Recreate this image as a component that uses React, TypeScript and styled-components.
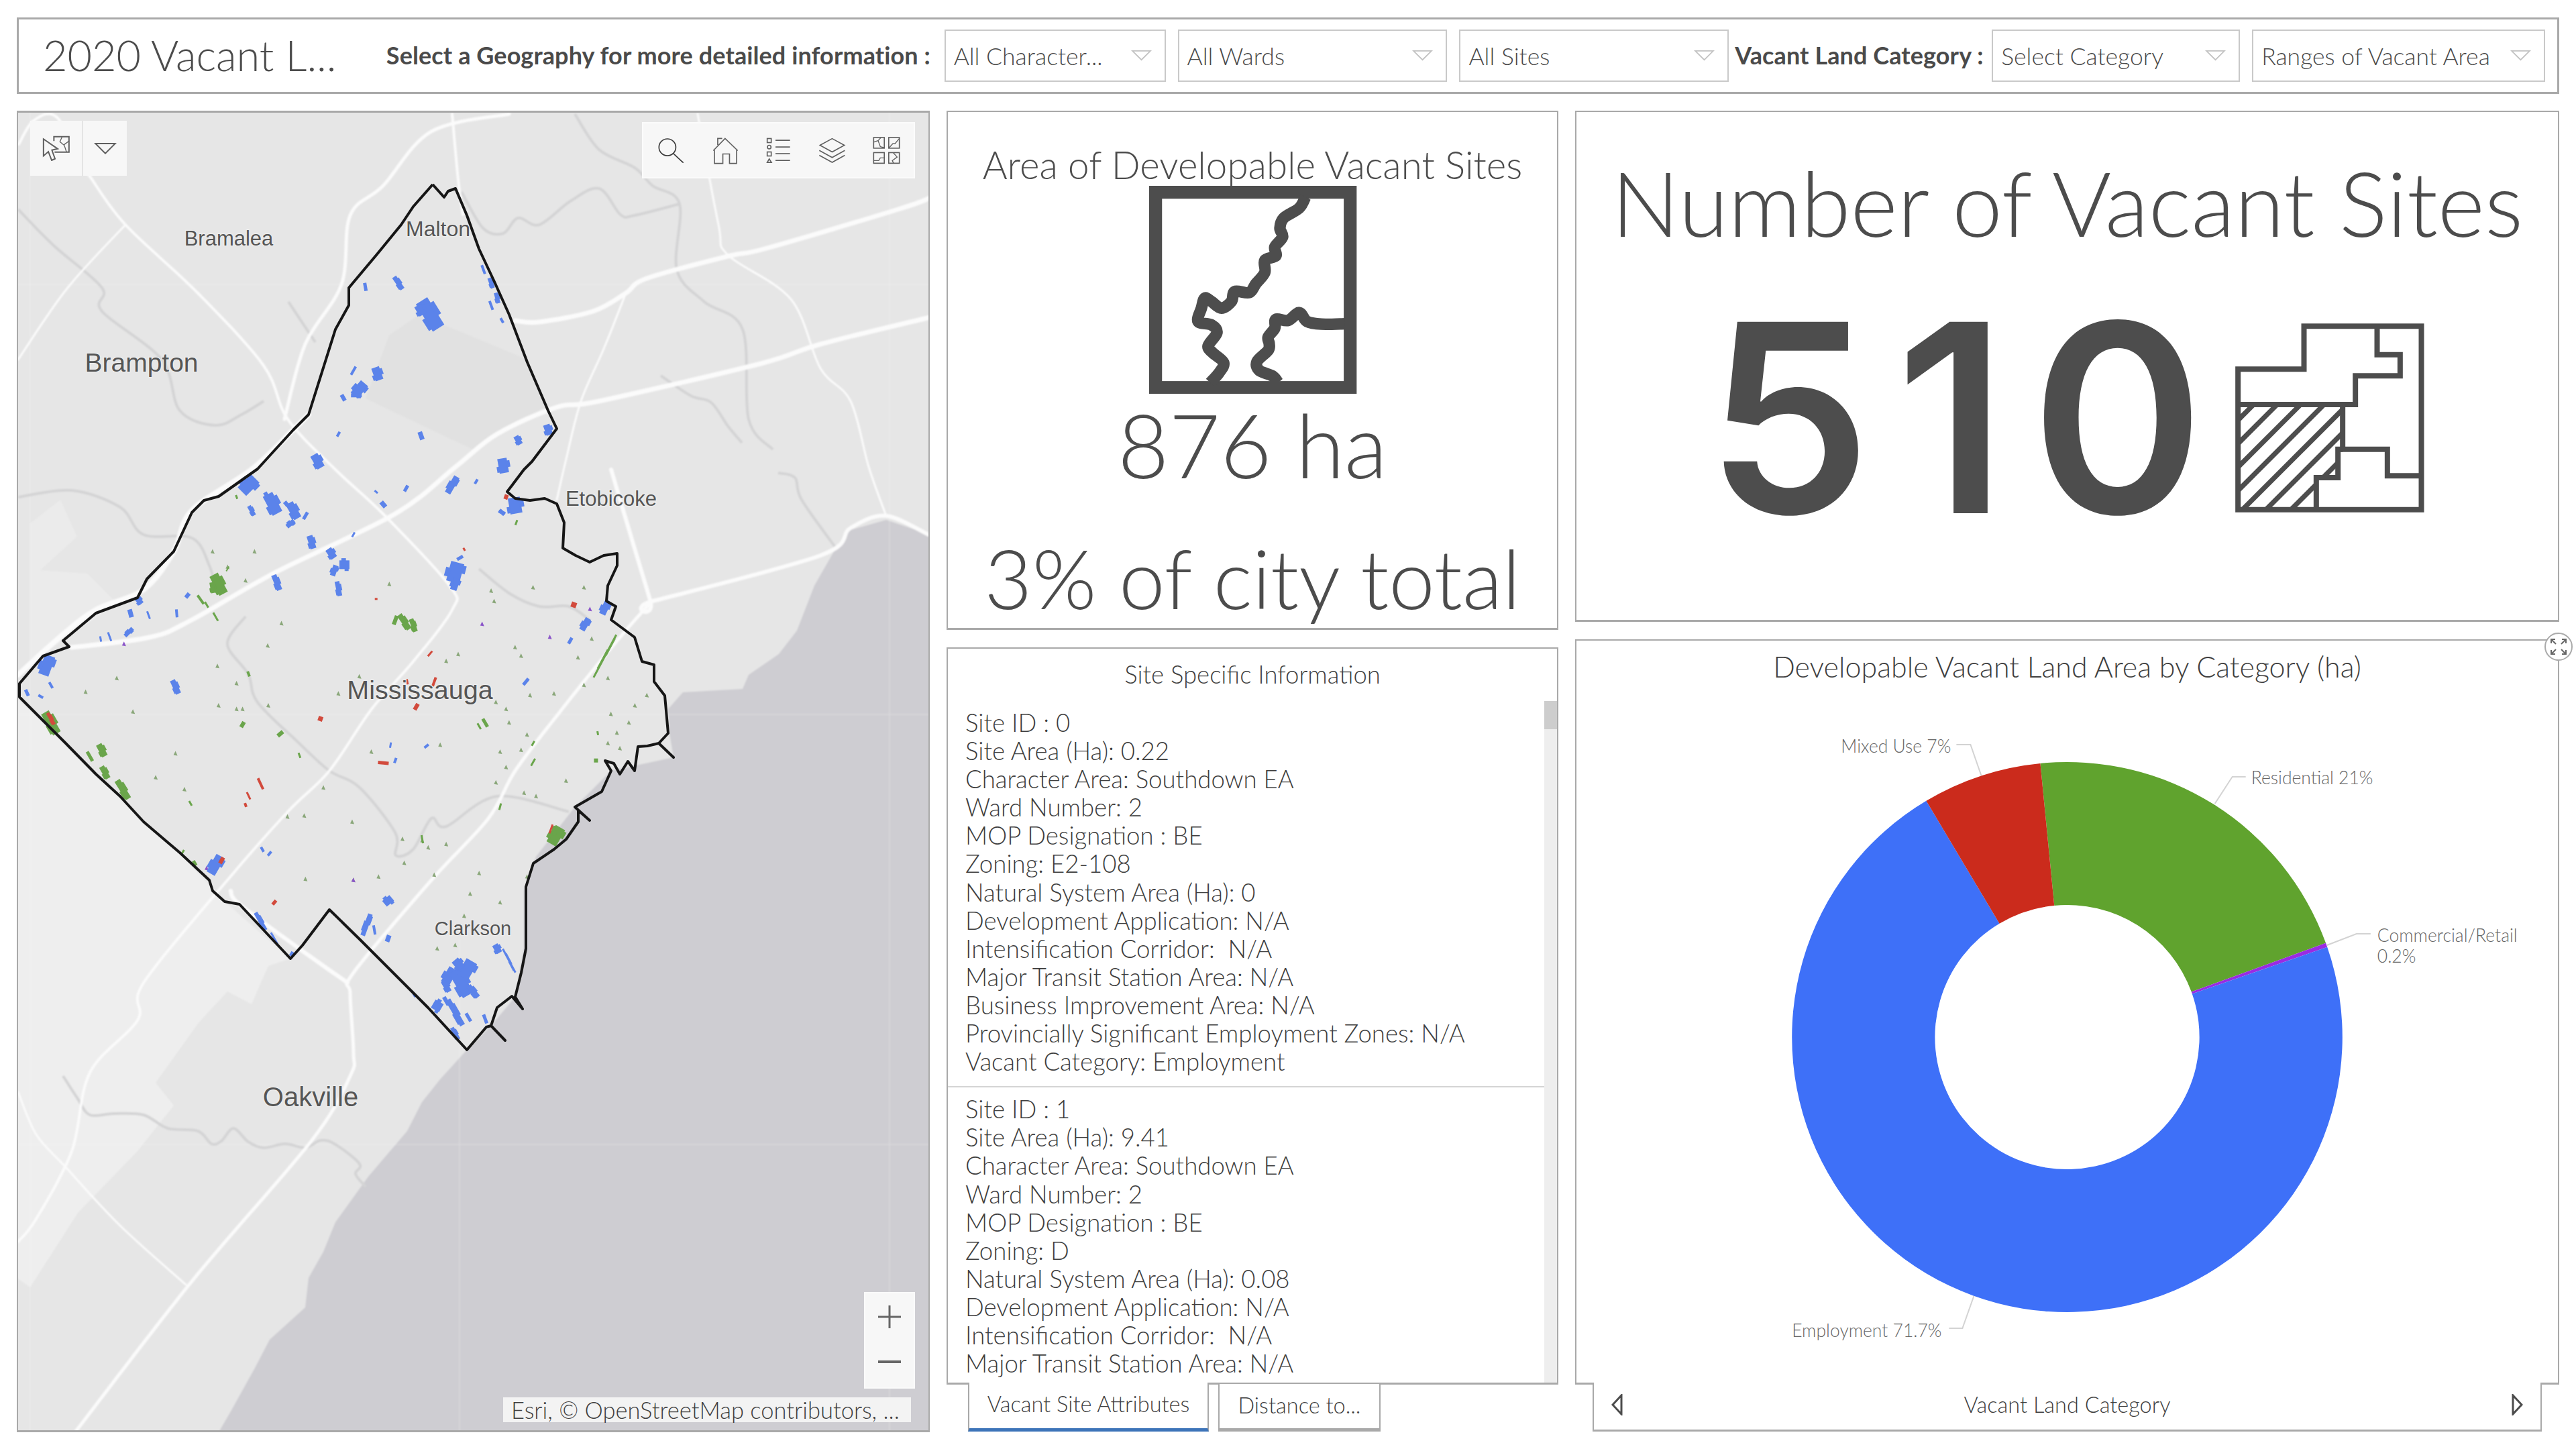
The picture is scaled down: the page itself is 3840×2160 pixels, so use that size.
import React from 'react';
import styled, { createGlobalStyle } from 'styled-components';

type Pt = [number, number];

const GlobalStyle = createGlobalStyle`
  html, body { margin: 0; padding: 0; background: #fff; }
  * { box-sizing: border-box; }
`;

const Page = styled.div`
  width: 3840px;
  height: 2160px;
  padding: 26px 25px 25px;
  font-family: Lato, "Open Sans", sans-serif;
  font-weight: 300;
  color: #4c4c4c;
  display: flex;
  flex-direction: column;
  gap: 25px;
`;

const Header = styled.header`
  height: 114px;
  border: 3px solid #a9a9a9;
  display: flex;
  align-items: center;
  padding-left: 36px;
`;
const AppTitle = styled.h1`
  margin: 0 0 4px;
  width: 512px;
  font-size: 63px;
  font-weight: 300;
  white-space: nowrap;
`;
const FilterLabel = styled.span<{ $w: number }>`
  font-size: 36px;
  font-weight: 700;
  letter-spacing: 0.1px;
  width: ${p => p.$w}px;
  white-space: nowrap;
  color: #4a4a4a;
  margin-bottom: 2px;
`;
const SelectBox = styled.div<{ $w: number; $gap?: number }>`
  width: ${p => p.$w}px;
  height: 78px;
  margin-right: ${p => p.$gap ?? 18}px;
  border: 2px solid #c9c9c9;
  display: flex;
  align-items: center;
  justify-content: space-between;
  padding: 0 19px 0 12px;
  font-size: 35.5px;
  font-weight: 300;
  color: #4a4a4a;
  white-space: nowrap;
`;

const Main = styled.main`
  flex: 1;
  display: grid;
  grid-template-columns: 1361px 912px 1467px;
  column-gap: 25px;
  min-height: 0;
`;
const MapPanel = styled.section`
  position: relative;
  border: 3px solid #a9a9a9;
  border-width: 3px 2px 3px 2px;
  overflow: hidden;
  background: #e6e6e6;
`;
const MapCanvas = styled.svg`
  position: absolute;
  inset: 0;
  width: 100%;
  height: 100%;
`;
const BaseLayer = styled.g`
  filter: blur(0.8px);
`;
const Widget = styled.div<{ $l?: number; $r?: number; $t?: number; $b?: number }>`
  position: absolute;
  ${p => (p.$l !== undefined ? `left: ${p.$l}px;` : '')}
  ${p => (p.$r !== undefined ? `right: ${p.$r}px;` : '')}
  ${p => (p.$t !== undefined ? `top: ${p.$t}px;` : '')}
  ${p => (p.$b !== undefined ? `bottom: ${p.$b}px;` : '')}
  background: #f7f7f7;
  display: flex;
  align-items: center;
`;
const SelectWidget = styled(Widget)`
  width: 144px;
  height: 82px;
`;
const SelectSlot = styled.div<{ $w: number; $line?: boolean }>`
  width: ${p => p.$w}px;
  height: 100%;
  display: flex;
  align-items: center;
  justify-content: center;
  ${p => (p.$line ? 'border-right: 2px solid #e4e4e4;' : '')}
`;
const ToolsWidget = styled(Widget)`
  width: 407px;
  height: 84px;
  gap: 38px;
  padding: 0 0 0 20px;
  border: 2px solid #fbfbfb;
`;
const ZoomWidget = styled(Widget)`
  width: 76px;
  height: 144px;
  flex-direction: column;
  justify-content: center;
  gap: 31px;
  padding-bottom: 3px;
  border: 2px solid #fafafa;
`;
const Attribution = styled.div`
  position: absolute;
  right: 26px;
  bottom: 12px;
  width: 608px;
  height: 37px;
  line-height: 37px;
  padding-left: 12px;
  background: #f3f3f3;
  font-size: 34.5px;
  font-weight: 300;
  color: #3f3f3f;
  white-space: nowrap;
`;

const MiddleColumn = styled.div`
  display: flex;
  flex-direction: column;
  gap: 26px;
  min-height: 0;
`;
const RightColumn = styled(MiddleColumn)``;
const AreaPanel = styled.section`
  height: 774px;
  border: 2px solid #a9a9a9;
  border-bottom-width: 3px;
  display: flex;
  flex-direction: column;
  align-items: center;
  padding-top: 43px;
`;
const AreaTitle = styled.h2`
  margin: 0 0 -3px;
  line-height: 70px;
  font-size: 56.5px;
  font-weight: 300;
  white-space: nowrap;
`;
const AreaValue = styled.div`
  font-size: 132px;
  line-height: 150px;
  font-weight: 300;
  white-space: nowrap;
`;
const AreaShare = styled.div`
  margin-top: 49px;
  font-size: 123px;
  line-height: 150px;
  font-weight: 300;
  white-space: nowrap;
`;
const NumberPanel = styled.section`
  height: 762px;
  border: 2px solid #a9a9a9;
  border-bottom-width: 3px;
  display: flex;
  flex-direction: column;
  align-items: center;
  padding-top: 54px;
`;
const NumberTitle = styled.h2`
  margin: 0;
  font-size: 134.5px;
  line-height: 160px;
  font-weight: 300;
  white-space: nowrap;
`;
const NumberRow = styled.div`
  margin-top: 42px;
  padding-right: 6px;
  display: flex;
  align-items: center;
  gap: 10px;
`;
const BigNumber = styled.div`
  font-family: Inter, "Open Sans", sans-serif;
  font-size: 392px;
  line-height: 400px;
  font-weight: 600;
  color: #4d4d4d;
  letter-spacing: 36px;
`;

const ListArea = styled.div`
  display: flex;
  flex-direction: column;
  flex: 1;
  min-height: 0;
`;
const ListPanel = styled.section`
  height: 1099px;
  border: 3px solid #a9a9a9;
  border-width: 2px 2px 3px 2px;
  display: flex;
  flex-direction: column;
  overflow: hidden;
`;
const ListTitle = styled.h3`
  margin: 0;
  text-align: center;
  font-size: 36.5px;
  line-height: 76px;
  font-weight: 300;
  color: #3f3f3f;
  flex: none;
`;
const ListBody = styled.div`
  flex: 1;
  display: flex;
  min-height: 0;
`;
const ListItems = styled.div`
  flex: 1;
  overflow: hidden;
`;
const SiteItem = styled.div`
  padding: 13px 26px 16px;
  font-size: 36.6px;
  line-height: 42.1px;
  font-weight: 300;
  color: #3e3e3e;
  white-space: pre;
  & + & {
    border-top: 2px solid #d4d4d4;
    padding-top: 11px;
  }
`;
const ScrollTrack = styled.div`
  width: 19px;
  background: #eeeeee;
  flex: none;
  margin-top: 2px;
`;
const ScrollThumb = styled.div`
  width: 100%;
  height: 42px;
  background: #cdcdcd;
`;
const Tabs = styled.div`
  display: flex;
  gap: 14px;
  padding-left: 32px;
  margin-top: -3px;
  position: relative;
`;
const Tab = styled.div<{ $active?: boolean; $w: number }>`
  width: ${p => p.$w}px;
  height: 73px;
  background: #fff;
  border: 2px solid #a9a9a9;
  border-top: ${p => (p.$active ? '0' : '2px solid #a9a9a9')};
  border-bottom: 5px solid ${p => (p.$active ? '#3d74b9' : '#a9a9a9')};
  text-align: center;
  line-height: 64px;
  font-size: 32.5px;
  font-weight: 300;
  color: #3f3f3f;
  white-space: nowrap;
`;

const ChartPanel = styled.section`
  position: relative;
  height: 1111px;
  border: 2px solid #a9a9a9;
  border-width: 2px 2px 3px 2px;
  flex: none;
`;
const ChartTitle = styled.h2`
  margin: 0;
  text-align: center;
  font-size: 43px;
  line-height: 77px;
  font-weight: 300;
  color: #3f3f3f;
`;
const ChartCanvas = styled.svg`
  display: block;
  width: 100%;
  height: 1029px;
`;
const ChartLabel = styled.text`
  font-family: Lato, sans-serif;
  font-size: 26.5px;
  font-weight: 300;
  fill: #666;
`;
const ExpandButton = styled.div`
  position: absolute;
  right: -22px;
  top: -12px;
  width: 42px;
  height: 42px;
  border-radius: 50%;
  border: 2px solid #aaa;
  background: #fff;
  display: flex;
  align-items: center;
  justify-content: center;
`;
const ChartFooter = styled.div`
  position: relative;
  margin: -3px 26px 0;
  height: 73px;
  background: #fff;
  border: 2px solid #a9a9a9;
  border-top: 0;
  border-bottom-width: 3px;
  display: flex;
  align-items: center;
  justify-content: space-between;
  padding: 0 26px 5px;
  font-size: 32.5px;
  font-weight: 300;
  color: #3f3f3f;
`;
const MapLabel = styled.text<{ $s: number }>`
  font-family: "Liberation Sans", Arial, sans-serif;
  font-size: ${p => p.$s}px;
  fill: #555;
  stroke: #eeeeee;
  stroke-width: 2.5px;
  paint-order: stroke;
  dominant-baseline: middle;
  text-anchor: middle;
`;

/* ---------- geometry helpers ---------- */
const smooth = (p: Pt[]) => {
  let d = `M${p[0][0]},${p[0][1]}`;
  for (let i = 0; i < p.length - 1; i++) {
    const a = p[Math.max(i - 1, 0)];
    const b = p[i];
    const c = p[i + 1];
    const e = p[Math.min(i + 2, p.length - 1)];
    d += ` C${b[0] + (c[0] - a[0]) / 6},${b[1] + (c[1] - a[1]) / 6} ${c[0] - (e[0] - b[0]) / 6},${c[1] - (e[1] - b[1]) / 6} ${c[0]},${c[1]}`;
  }
  return d;
};
const poly = (p: Pt[]) => p.map(q => q.join(',')).join(' ');

const polar = (cx: number, cy: number, r: number, deg: number): Pt => {
  const a = ((deg - 90) * Math.PI) / 180;
  return [cx + r * Math.cos(a), cy + r * Math.sin(a)];
};
const ring = (from: number, to: number) => {
  const [cx, cy, R, r] = [3082, 1546, 410, 197];
  const large = to - from > 180 ? 1 : 0;
  const a = polar(cx, cy, R, from);
  const b = polar(cx, cy, R, to);
  const c = polar(cx, cy, r, to);
  const d = polar(cx, cy, r, from);
  return `M${a} A${R},${R} 0 ${large} 1 ${b} L${c} A${r},${r} 0 ${large} 0 ${d} Z`;
};

/* ---------- map data (page coordinates) ---------- */
const boundary: Pt[] = [
  [645,275],[662,294],[668,285],[679,281],[696,321],[714,371],[737,420],[759,469],[786,540],[817,612],[830,639],[793,688],[781,700],[756,733],[768,743],[790,746],[812,743],[830,751],[841,779],[839,817],[858,828],[879,838],[900,828],[920,825],[920,843],[906,873],[904,896],[918,904],[911,924],[946,950],[957,986],[975,991],[975,1016],[991,1037],[996,1093],[982,1108],[1004,1129],[982,1108],[965,1112],[951,1113],[946,1149],[936,1135],[924,1154],[915,1138],[902,1134],[911,1149],[897,1180],[857,1203],[879,1223],[862,1208],[862,1225],[844,1251],[826,1266],[795,1287],[784,1322],[784,1414],[777,1450],[768,1486],[779,1504],[763,1485],[741,1502],[732,1529],[753,1551],[732,1529],[725,1531],[696,1565],[638,1502],[580,1444],[536,1400],[491,1356],[451,1409],[433,1429],[357,1348],[335,1344],[317,1328],[312,1312],[268,1271],[214,1225],[179,1187],[143,1154],[98,1108],[29,1039],[29,1019],[64,978],[103,964],[94,955],[143,914],[205,891],[219,863],[259,822],[286,764],[304,746],[326,740],[384,699],[437,641],[460,618],[500,491],[520,455],[520,429],[562,379],[598,335],[616,308],[645,275],
];
const lake: Pt[] = [
  [1386,797],[1321,775],[1268,790],[1246,817],[1214,873],[1188,940],[1161,975],[1116,1006],[1107,1027],[1018,1032],[996,1057],[998,1093],[1004,1129],[911,1149],[857,1203],[799,1277],[781,1328],[781,1414],[768,1486],[732,1529],[696,1565],[656,1609],[629,1643],[607,1686],[549,1754],[500,1822],[482,1866],[460,1905],[455,1949],[402,1997],[379,2041],[344,2104],[326,2135],[1386,2135],
];
const lightWest: Pt[] = [
  [25,1040],[98,1108],[143,1154],[214,1225],[268,1271],[335,1344],[433,1429],[400,1440],[375,1497],[339,1478],[295,1526],[232,1614],[259,1648],[205,1716],[116,1808],[45,1919],[25,1905],
];
const lightNorth: Pt[] = [[45,780],[90,745],[115,800],[60,850],[130,855],[175,900],[100,950],[45,990]];
const darkBand: Pt[] = [[580,500],[625,469],[786,536],[812,607],[705,670],[545,594]];

const roads: [Pt[], number][] = [
  [[[1386,295],[1339,312],[1143,370],[1085,382],[964,415],[933,437],[884,464],[804,480],[768,478]],7],
  [[[759,170],[643,196],[571,277],[522,321],[509,424],[455,513],[424,625]],5],
  [[[674,170],[683,268],[690,320]],4],
  [[[1040,170],[1071,335],[1085,380],[1179,446],[1223,549],[1268,598],[1295,696],[1321,769]],3],
  [[[1386,473],[1223,513],[1134,542],[893,598],[830,607],[741,647],[679,696],[589,766],[411,853],[286,924],[223,950],[107,965]],7],
  [[[933,437],[900,520],[866,598],[845,680],[830,745]],3],
  [[[28,215],[50,180],[85,175],[125,250],[134,263],[187,335],[295,437],[393,545],[429,625],[500,700],[571,766],[670,873],[674,909],[616,986],[554,1057],[491,1149],[429,1210],[339,1312],[214,1465],[205,1521],[134,1599],[107,1716],[54,1817],[27,1851]],4],
  [[[187,335],[100,430],[27,536]],3],
  [[[911,700],[969,894],[973,896],[1223,828],[1268,787],[1321,769],[1384,797]],6],
  [[[969,899],[920,955],[830,1067],[768,1149],[728,1220],[643,1312],[527,1450],[522,1481],[527,1570],[522,1604],[464,1701],[286,1910],[112,2135]],5],
  [[[344,1328],[357,1348],[446,1414],[518,1465]],6],
  [[[27,1006],[89,950],[143,909],[214,879],[259,822],[286,761],[375,700],[437,641],[460,618]],8],
  [[[27,1628],[54,1691],[98,1740],[179,1827],[277,1915]],3],
];
const rivers: Pt[][] = [
  [[94,1604],[116,1638],[134,1662],[170,1660],[214,1662],[250,1682],[295,1686],[315,1705],[330,1701],[348,1682],[370,1702],[393,1711],[425,1705],[455,1711],[478,1700],[500,1706],[536,1735],[530,1750],[545,1769]],
  [[27,741],[107,731],[179,756],[214,797],[286,802],[312,843],[322,880]],
  [[366,919],[339,960],[370,1005],[384,1047],[446,1108],[491,1149],[536,1174],[589,1241],[590,1275],[616,1266],[643,1220],[665,1232],[741,1187],[848,1210]],
  [[857,170],[893,223],[946,250],[973,277],[1013,304],[1009,402],[1050,450],[1107,491],[1116,625],[1152,670]],
  [[27,312],[80,366],[152,429],[152,464],[241,536],[268,612],[321,634],[360,618],[393,598]],
  [[688,286],[720,340],[750,348],[772,325],[804,335],[850,300],[893,281],[925,320],[946,321],[1013,304]],
  [[714,848],[760,885],[804,904],[848,904],[880,925]],
  [[985,560],[1030,590],[1060,600],[1085,635],[1106,660]],
  [[1160,705],[1185,712],[1195,745],[1246,817]],
  [[430,450],[460,495],[470,510]],
];

type Parcel = [number, number, number, number, number, string];
const B = '#5b83ea';
const G = '#6aa54b';
const R = '#d24a3c';
const z1 = (a: number[], c: string): Parcel => [a[0] / 1.12, a[1] / 2.24, a[2], a[3], a[4], c];
const z3 = (a: number[], c: string): Parcel => [a[0] / 1.12, 700 + a[1] / 1.96, a[2], a[3], a[4], c];
const z4 = (a: number[], c: string): Parcel => [a[0] / 1.12, 1400 + a[1] / 2.06, a[2], a[3], a[4], c];

const parcels: Parcel[] = [
  ...[[718,1050,48,20,58],[702,1035,16,12,60],[630,1248,20,12,70],[600,1300,24,14,-50],[595,1320,16,6,0],[573,1328,10,6,60],[665,945,22,7,55],[703,1455,12,7,70],[865,1470,14,8,60],[915,1435,16,10,70],[820,945,16,6,70],[830,995,16,6,75],[807,900,14,4,70],[820,1020,14,4,70],[610,958,12,5,80],[590,1238,14,4,-60],[530,1540,22,12,60],[840,1555,22,14,80],[838,1070,8,4,60],[565,1450,8,4,-60]].map(a => z1(a, B)),
  ...[[415,45,28,18,-45],[455,100,32,16,62],[490,120,26,12,60],[485,158,14,7,-40],[420,120,16,6,60],[520,212,20,9,72],[553,245,16,10,55],[575,278,15,13,0],[558,295,16,8,-70],[462,330,24,8,68],[565,348,22,7,78],[755,45,28,9,-60],[860,105,24,18,80],[838,125,10,6,40],[640,102,10,7,50],[760,300,30,20,-75],[760,335,18,10,-70],[768,258,10,5,-30],[1010,405,20,10,-65],[977,452,20,9,-60],[952,500,10,5,-60],[232,383,12,8,50],[218,420,12,7,75],[248,425,12,3,70],[295,420,12,4,85],[313,368,8,6,-50],[215,475,16,6,-45],[183,488,14,3,70],[168,495,8,3,80],[78,572,30,16,-70],[85,630,10,4,60],[45,652,10,5,65],[68,663,8,4,30],[293,635,22,8,65],[878,620,12,5,-50],[360,1155,30,14,-60],[438,1110,8,4,60],[450,1122,8,4,-50],[648,1260,14,11,-40],[612,1330,34,7,-70],[625,1345,14,4,80],[648,1370,10,7,-70],[830,1400,14,9,60],[850,1435,40,3,62],[435,1320,30,6,60],[458,1370,20,3,60],[487,1415,7,5,-60],[652,805,8,3,-80],[712,808,8,4,-40],[660,850,8,4,-70],[510,135,12,5,-60],[590,190,8,3,-60],[678,55,10,5,-60],[795,35,8,4,-60],[838,125,10,5,20],[628,65,6,3,40],[445,75,10,6,60],[478,100,8,6,50],[750,1480,26,14,-60],[770,1500,42,18,60],[780,1460,28,18,-60],[765,1445,16,12,50],[790,1525,22,8,50],[745,1510,18,8,60]].map(a => z3(a, B)),
  ...[[730,205,14,14,30],[745,190,14,6,60],[760,225,44,8,60],[782,240,14,5,60],[810,245,14,5,70],[760,290,20,6,60],[692,172,6,4,60]].map(a => z4(a, B)),
  ...[[365,335,32,14,62],[355,345,16,7,80],[335,380,16,4,55],[345,395,10,3,60],[360,430,14,3,60],[675,445,26,8,55],[690,455,20,7,70],[660,440,14,6,-70],[415,597,8,4,70],[405,745,9,6,-60],[468,772,10,6,-40],[500,835,8,3,70],[85,740,36,13,60],[170,820,20,9,62],[150,838,16,5,60],[175,885,20,8,60],[205,935,32,9,58],[318,975,8,3,60],[305,1118,8,3,-60],[325,1150,8,5,60],[810,740,14,5,60],[928,1070,28,16,-60],[925,1055,14,6,80],[1010,545,72,3,-62],[995,850,6,6,0],[890,855,12,3,-60],[998,770,6,3,80],[835,985,10,3,-75],[862,155,8,3,-70],[395,80,6,3,70],[380,290,8,2,-60],[800,750,10,3,60],[890,800,8,3,-60],[705,1080,12,3,80]].map(a => z3(a, G)),
  ...[[85,728,20,5,60],[435,918,18,4,65],[415,953,12,3,65],[410,980,6,4,70],[535,728,7,7,20],[640,857,16,5,5],[695,693,10,6,-60],[725,620,14,4,-70],[680,620,8,3,80],[718,538,10,3,-50],[958,395,8,8,20],[458,1265,8,5,-50],[920,1050,14,3,-70],[370,1142,10,6,-60],[845,80,7,6,-70],[628,378,4,3,0],[775,233,5,3,60]].map(a => z3(a, R)),
];
const tiny: Pt[] = [[470,450],[447,515],[363,575],[195,610],[143,650],[365,690],[405,700],[395,625],[448,690],[222,708],[293,830],[260,900],[308,935],[540,930],[480,1015],[508,1012],[588,1030],[672,1080],[675,1150],[725,1185],[632,1190],[510,1197],[590,1200],[760,1390],[730,1400],[775,1305],[800,1180],[835,1265],[880,1190],[785,1240],[875,945],[828,915],[845,870],[870,820],[835,825],[945,910],[895,955],[745,1095],[715,1105],[705,1085],[620,825],[735,805],[880,775],[850,740],[845,700],[828,680],[885,660],[925,655],[975,630],[965,550],[870,545],[860,520],[765,540],[745,560],[650,335],[825,385],[820,355],[890,345],[975,345],[1030,770],[1050,740],[1020,715],[1060,690],[1035,815],[1015,800],[1080,660],[988,495],[355,240],[425,240],[380,285],[410,325],[565,655],[600,605],[395,700],[1015,610]];
const purple: Pt[] = [[805,452],[918,490],[345,1165],[207,510],[590,1200],[985,408]];

/* ---------- icons ---------- */
const Line = { fill: 'none', stroke: '#606060', strokeWidth: 5 } as const;

const CursorMapIcon = () => (
  <svg width="44" height="38" viewBox="190 180 132 115" fill="none" stroke="#5f5f5f" strokeWidth="6">
    <path d="M245,205 V185 H313 V255 H248" />
    <path d="M282,186 L272,208 L292,225 L302,255 M290,222 L313,205" strokeWidth="4" />
    <path d="M198,196 L262,240 L236,246 L250,285 L235,292 L220,253 L198,272 Z" fill="#f7f7f7" />
  </svg>
);
const DownTriangle = ({ c = '#5f5f5f', w = 34, s = 2 }: { c?: string; w?: number; s?: number }) => (
  <svg width={w} height={w * 0.55} viewBox="0 0 34 19" fill="none" stroke={c} strokeWidth={s}>
    <path d="M2,2 H32 L17,17 Z" />
  </svg>
);
const SearchIcon = () => (
  <svg width="43" height="43" viewBox="85 90 130 130" fill="none" stroke="#3a3a3a" strokeWidth="5">
    <circle cx="133" cy="140" r="38" />
    <path d="M160,168 L205,210" />
  </svg>
);
const HomeIcon = () => (
  <svg width="43" height="43" viewBox="335 95 130 130" {...Line}>
    <path d="M345,160 L398,105 L455,160" />
    <path d="M350,158 V218 H388 V175 H418 V218 H450 V158" />
    <path d="M365,135 V105 H385" />
  </svg>
);
const ListIcon = () => (
  <svg width="40" height="42" viewBox="580 95 120 125" {...Line}>
    <rect x="588" y="105" width="18" height="18" />
    <circle cx="597" cy="143" r="8" />
    <rect x="588" y="165" width="18" height="18" />
    <path d="M597,196 L588,212 H607 Z" />
    <path d="M625,113 H690 M625,143 H690 M625,173 H690 M625,203 H690" />
  </svg>
);
const LayersIcon = () => (
  <svg width="43" height="42" viewBox="815 95 130 125" {...Line}>
    <path d="M880,105 L935,135 L880,165 L825,135 Z" />
    <path d="M822,158 L880,190 L937,158" />
    <path d="M822,180 L880,212 L937,180" />
  </svg>
);
const GridIcon = () => (
  <svg width="43" height="43" viewBox="1055 98 130 130" {...Line}>
    <rect x="1062" y="104" width="48" height="48" />
    <rect x="1130" y="104" width="48" height="48" />
    <rect x="1062" y="172" width="48" height="48" />
    <rect x="1130" y="172" width="48" height="48" />
    <path d="M1062,125 L1082,118 L1092,145 L1110,150 M1082,118 L1095,104" strokeWidth="4" />
    <path d="M1130,152 L1148,132 H1158 L1178,108" strokeWidth="4" />
    <path d="M1062,208 H1085 L1092,196 H1110" strokeWidth="4" />
    <path d="M1150,172 L1168,192 L1146,208 L1152,220" strokeWidth="4" />
  </svg>
);

const river1: Pt[] = [[798,100],[770,150],[700,195],[683,240],[695,280],[660,325],[665,365],[615,385],[615,440],[575,490],[545,530],[480,525],[465,570],[420,600],[375,570],[345,555],[330,600],[315,660],[375,675],[400,710],[360,770],[380,800],[430,845],[410,890],[370,935]];
const river2: Pt[] = [[675,935],[650,905],[590,880],[580,840],[630,790],[635,760],[630,730],[660,690],[665,650],[720,655],[770,620],[805,660],[870,672],[975,670]];
const AreaIcon = () => (
  <svg width="311" height="312" viewBox="95 50 932 935" fill="none" stroke="#4d4d4d" strokeLinejoin="round">
    <rect x="124" y="79" width="875" height="878" strokeWidth="58" strokeLinejoin="miter" />
    <path d={smooth(river1)} strokeWidth="52" />
    <path d={smooth(river2)} strokeWidth="52" />
  </svg>
);
const hatch = [603, 708, 813, 918, 1023, 1128, 1240];
const ParcelIcon = () => (
  <svg width="282" height="282" viewBox="93 65 845 846" fill="none" stroke="#4d4d4d" strokeWidth="24">
    <defs>
      <clipPath id="hatchArea">
        <path d="M105,428 H573 V628 H552 V755 H455 V898 H105 Z" />
      </clipPath>
    </defs>
    <g clipPath="url(#hatchArea)" strokeWidth="22">
      {hatch.map(k => (
        <line key={k} x1={105} y1={k - 105} x2={k - 428} y2={428} />
      ))}
    </g>
    <path d="M105,270 H400 V78 H925 V898 H105 Z" />
    <path d="M727,78 V205 H830 V300 H630 V428 H105" />
    <path d="M573,428 V628 H773 V747 H925" />
    <path d="M573,628 H552 V755 H455 V898" />
  </svg>
);
const ExpandIcon = () => (
  <svg width="26" height="26" viewBox="0 0 26 26" fill="none" stroke="#666" strokeWidth="2">
    <path d="M2,8 V2 H8 M2,2 L9,9 M18,2 H24 V8 M24,2 L17,9 M2,18 V24 H8 M2,24 L9,17 M18,24 H24 V18 M24,24 L17,17" />
  </svg>
);
const PagerArrow = ({ left }: { left?: boolean }) => (
  <svg width="17" height="32" viewBox="0 0 17 32" fill="none" stroke="#4c4c4c" strokeWidth="3">
    <path d={left ? 'M15,2 L2,16 L15,30 Z' : 'M2,2 L15,16 L2,30 Z'} />
  </svg>
);

const firstSite = `Site ID : 0
Site Area (Ha): 0.22
Character Area: Southdown EA
Ward Number: 2
MOP Designation : BE
Zoning: E2-108
Natural System Area (Ha): 0
Development Application: N/A
Intensification Corridor:  N/A
Major Transit Station Area: N/A
Business Improvement Area: N/A
Provincially Significant Employment Zones: N/A
Vacant Category: Employment`;
const secondSite = `Site ID : 1
Site Area (Ha): 9.41
Character Area: Southdown EA
Ward Number: 2
MOP Designation : BE
Zoning: D
Natural System Area (Ha): 0.08
Development Application: N/A
Intensification Corridor:  N/A
Major Transit Station Area: N/A`;

const ParcelShape = ({ p }: { p: Parcel }) => {
  const [x, y, l, w, r, c] = p;
  const big = l * w > 90;
  return (
    <g transform={`translate(${x} ${y}) rotate(${r})`} fill={c}>
      <rect x={-l / 2} y={-w / 2} width={l} height={w} />
      {big && <rect x={-l * 0.3} y={-w * 0.75} width={l * 0.45} height={w * 0.4} />}
      {big && <rect x={l * 0.02} y={w * 0.4} width={l * 0.4} height={w * 0.32} />}
    </g>
  );
};

const MapArt = () => (
  <MapCanvas viewBox="27 168 1357 1964" preserveAspectRatio="none">
    <BaseLayer>
      <rect x="0" y="0" width="1500" height="2200" fill="#e6e6e6" />
      <polygon points={poly(lightWest)} fill="#eeeeee" />
      <polygon points={poly(lightNorth)} fill="#ebebeb" />
      <polygon points={poly(darkBand)} fill="#e1e1e1" />
      <polygon points={poly(lake)} fill="#cecdd2" />
      {[[45, 168, 45, 2135], [685, 1400, 685, 2135], [1326, 168, 1326, 2135], [27, 424, 1386, 424], [27, 1065, 1386, 1065], [27, 1706, 1386, 1706]].map((l, i) => (
        <line key={i} x1={l[0]} y1={l[1]} x2={l[2]} y2={l[3]} stroke="#ffffff" strokeOpacity=".16" strokeWidth="2" />
      ))}
      {rivers.map((r, i) => (
        <path key={i} d={smooth(r)} fill="none" stroke="#d4d4d5" strokeWidth="4" />
      ))}
      {roads.map(([r, w], i) => (
        <path key={i} d={smooth(r)} fill="none" stroke="#fbfbfb" strokeWidth={w} strokeLinecap="round" />
      ))}
    </BaseLayer>
    {tiny.map((t, i) => {
      const [x, y] = [t[0] / 1.12, 700 + t[1] / 1.96];
      return <polygon key={i} points={`${x},${y - 4} ${x + 3},${y + 3} ${x - 3},${y + 2}`} fill="#8aa77a" />;
    })}
    {purple.map((t, i) => {
      const [x, y] = [t[0] / 1.12, 700 + t[1] / 1.96];
      return <polygon key={i} points={`${x},${y - 4} ${x + 3},${y + 3} ${x - 3},${y + 2}`} fill="#8b55c9" />;
    })}
    {parcels.map((p, i) => (
      <ParcelShape key={i} p={p} />
    ))}
    <polyline points={poly(boundary)} fill="none" stroke="#161616" strokeWidth="4" strokeLinejoin="round" />
    <MapLabel $s={31} x="341" y="358">Bramalea</MapLabel>
    <MapLabel $s={32} x="653" y="344">Malton</MapLabel>
    <MapLabel $s={39} x="211" y="544">Brampton</MapLabel>
    <MapLabel $s={31} x="911" y="746">Etobicoke</MapLabel>
    <MapLabel $s={39.5} x="626" y="1032">Mississauga</MapLabel>
    <MapLabel $s={29} x="705" y="1386">Clarkson</MapLabel>
    <MapLabel $s={40} x="463" y="1638">Oakville</MapLabel>
  </MapCanvas>
);

export default function App() {
  return (
    <>
      <GlobalStyle />
      <Page>
        <Header>
          <AppTitle>2020 Vacant L...</AppTitle>
          <FilterLabel $w={832}>Select a Geography for more detailed information :</FilterLabel>
          <SelectBox $w={330}>All Character...<DownTriangle c="#c2c2c2" w={31} /></SelectBox>
          <SelectBox $w={402}>All Wards<DownTriangle c="#c2c2c2" w={31} /></SelectBox>
          <SelectBox $w={402} $gap={9}>All Sites<DownTriangle c="#c2c2c2" w={31} /></SelectBox>
          <FilterLabel $w={383}>Vacant Land Category :</FilterLabel>
          <SelectBox $w={370}>Select Category<DownTriangle c="#c2c2c2" w={31} /></SelectBox>
          <SelectBox $w={437}>Ranges of Vacant Area<DownTriangle c="#c2c2c2" w={31} /></SelectBox>
        </Header>
        <Main>
          <MapPanel>
            <MapArt />
            <SelectWidget $l={18} $t={12}>
              <SelectSlot $w={79} $line><CursorMapIcon /></SelectSlot>
              <SelectSlot $w={65}><DownTriangle /></SelectSlot>
            </SelectWidget>
            <ToolsWidget $r={20} $t={14}>
              <SearchIcon />
              <HomeIcon />
              <ListIcon />
              <LayersIcon />
              <GridIcon />
            </ToolsWidget>
            <ZoomWidget $r={20} $b={62}>
              <svg width="36" height="36" viewBox="0 0 36 36" stroke="#666" strokeWidth="3"><path d="M18,1 V35 M1,18 H35" /></svg>
              <svg width="36" height="36" viewBox="0 0 36 36" stroke="#666" strokeWidth="4"><path d="M1,18 H35" /></svg>
            </ZoomWidget>
            <Attribution>Esri, © OpenStreetMap contributors, ...</Attribution>
          </MapPanel>
          <MiddleColumn>
            <AreaPanel>
              <AreaTitle>Area of Developable Vacant Sites</AreaTitle>
              <AreaIcon />
              <AreaValue>876 ha</AreaValue>
              <AreaShare>3% of city total</AreaShare>
            </AreaPanel>
            <ListArea>
              <ListPanel>
                <ListTitle>Site Specific Information</ListTitle>
                <ListBody>
                  <ListItems>
                    <SiteItem>{firstSite}</SiteItem>
                    <SiteItem>{secondSite}</SiteItem>
                  </ListItems>
                  <ScrollTrack><ScrollThumb /></ScrollTrack>
                </ListBody>
              </ListPanel>
              <Tabs>
                <Tab $active $w={359}>Vacant Site Attributes</Tab>
                <Tab $w={242}>Distance to...</Tab>
              </Tabs>
            </ListArea>
          </MiddleColumn>
          <RightColumn>
            <NumberPanel>
              <NumberTitle>Number of Vacant Sites</NumberTitle>
              <NumberRow>
                <BigNumber>510</BigNumber>
                <ParcelIcon />
              </NumberRow>
            </NumberPanel>
            <div>
              <ChartPanel>
                <ChartTitle>Developable Vacant Land Area by Category (ha)</ChartTitle>
                <ChartCanvas viewBox="2351 1032 1462 1029" preserveAspectRatio="none">
                  <path d={ring(-5.6, 70)} fill="#60a32e" />
                  <path d={ring(70, 70.9)} fill="#9a2be2" />
                  <path d={ring(70.9, 329.2)} fill="#3e70f8" />
                  <path d={ring(329.2, 354.4)} fill="#cb2b1c" />
                  <g fill="none" stroke="#d3d3d3" strokeWidth="2">
                    <polyline points="2917,1110 2938,1110 2954,1156" />
                    <polyline points="3348,1158 3328,1158 3302,1198" />
                    <polyline points="3534,1392 3513,1392 3469,1409" />
                    <polyline points="2906,1980 2926,1980 2943,1932" />
                  </g>
                  <ChartLabel x="2745" y="1122">Mixed Use 7%</ChartLabel>
                  <ChartLabel x="3356" y="1169">Residential 21%</ChartLabel>
                  <ChartLabel x="3544" y="1404">Commercial/Retail</ChartLabel>
                  <ChartLabel x="3544" y="1435">0.2%</ChartLabel>
                  <ChartLabel x="2672" y="1993">Employment 71.7%</ChartLabel>
                </ChartCanvas>
                <ExpandButton><ExpandIcon /></ExpandButton>
              </ChartPanel>
              <ChartFooter>
                <PagerArrow left />
                <span>Vacant Land Category</span>
                <PagerArrow />
              </ChartFooter>
            </div>
          </RightColumn>
        </Main>
      </Page>
    </>
  );
}
